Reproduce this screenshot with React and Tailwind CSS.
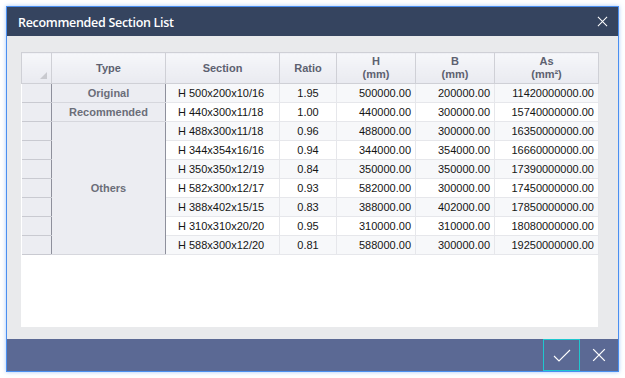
import React from "react";

const rows = [
  ["H 500x200x10/16", "1.95", "500000.00", "200000.00", "11420000000.00"],
  ["H 440x300x11/18", "1.00", "440000.00", "300000.00", "15740000000.00"],
  ["H 488x300x11/18", "0.96", "488000.00", "300000.00", "16350000000.00"],
  ["H 344x354x16/16", "0.94", "344000.00", "354000.00", "16660000000.00"],
  ["H 350x350x12/19", "0.84", "350000.00", "350000.00", "17390000000.00"],
  ["H 582x300x12/17", "0.93", "582000.00", "300000.00", "17450000000.00"],
  ["H 388x402x15/15", "0.83", "388000.00", "402000.00", "17850000000.00"],
  ["H 310x310x20/20", "0.95", "310000.00", "310000.00", "18080000000.00"],
  ["H 588x300x12/20", "0.81", "588000.00", "300000.00", "19250000000.00"],
];

const XIcon = ({ size = 12 }) => (
  <svg width={size} height={size} viewBox="0 0 12 12" fill="none" stroke="white" strokeWidth="1.1">
    <path d="M1 1L11 11M11 1L1 11" />
  </svg>
);

const th = "border border-[#cfd0d6] bg-gradient-to-b from-[#f6f7fa] to-[#e9eaf0] text-[#5d6170] font-bold leading-[13px] p-0";
const typeCell = "border-r border-r-[#8e909c] border-b border-b-[#d6d7dd] bg-[#ecedf2] text-[#6b6e79] font-bold text-center p-0";
const rhCell = "border-r border-r-[#8e909c] border-b border-b-[#c9cad1] bg-[#ecedf2] p-0";
const cell = "border-r border-b border-[#e6e7eb] p-0 h-[19px]";

export default function App() {
  return (
    <div className="w-[625px] h-[378px] bg-white p-[6px]">
      <div className="w-[613px] h-[366px] border border-[#4a8ff0] shadow-[0_0_4px_rgba(74,143,240,0.5)] flex flex-col bg-[#e9eaec]">
        <div className="h-[29px] bg-[#35445f] flex items-center justify-between pl-[11px] pr-[10px]">
          <span className="text-white text-[12.5px] font-semibold pt-[4px]" style={{ fontFamily: "'Open Sans', sans-serif" }}>
            <span className="tracking-[-0.3px]">Recommended Section List</span>
          </span>
          <XIcon size={11} />
        </div>
        <div className="flex-1 pl-[14px] pr-[20px] pt-[16px] pb-[12px]">
          <div className="bg-white h-full">
            <table
              className="border-collapse table-fixed text-[11px]"
              style={{ fontFamily: "'Liberation Sans', Arial, sans-serif", width: 577 }}
            >
              <colgroup>
                <col style={{ width: 30 }} />
                <col style={{ width: 114 }} />
                <col style={{ width: 114 }} />
                <col style={{ width: 57 }} />
                <col style={{ width: 79 }} />
                <col style={{ width: 79 }} />
                <col style={{ width: 104 }} />
              </colgroup>
              <thead>
                <tr className="h-[31px]">
                  <th className={th + " relative"}>
                    <div className="absolute right-[4px] bottom-[4px] w-0 h-0 border-l-[7px] border-l-transparent border-b-[7px] border-b-[#c9cacf]" />
                  </th>
                  <th className={th}>Type</th>
                  <th className={th}>Section</th>
                  <th className={th}>Ratio</th>
                  <th className={th}>H<br />(mm)</th>
                  <th className={th}>B<br />(mm)</th>
                  <th className={th}>As<br />(mm²)</th>
                </tr>
              </thead>
              <tbody className="text-[#151515]">
                {rows.map((r, i) => (
                  <tr key={i} className={i % 2 === 0 ? "bg-[#f7f8fa]" : "bg-white"}>
                    <td className={rhCell} />
                    {i === 0 && <td className={typeCell}>Original</td>}
                    {i === 1 && <td className={typeCell}>Recommended</td>}
                    {i === 2 && (
                      <td rowSpan={7} className={typeCell + " border-b-[#a9abb5]"}>Others</td>
                    )}
                    <td className={cell + " pl-[12px] text-left"}>{r[0]}</td>
                    <td className={cell + " text-center"}>{r[1]}</td>
                    <td className={cell + " text-right pr-[4px]"}>{r[2]}</td>
                    <td className={cell + " text-right pr-[4px]"}>{r[3]}</td>
                    <td className={cell + " text-right pr-[4px]"}>{r[4]}</td>
                  </tr>
                ))}
              </tbody>
            </table>
          </div>
        </div>
        <div className="h-[32px] bg-[#5b6994] flex justify-end">
          <button className="w-[37px] h-[32px] border border-[#1fc7cf] flex items-center justify-center">
            <svg width="18" height="13" viewBox="0 0 18 13" fill="none" stroke="white" strokeWidth="1.1">
              <path d="M1 7L6 12L17 1" />
            </svg>
          </button>
          <button className="w-[38px] h-[32px] flex items-center justify-center">
            <XIcon size={14} />
          </button>
        </div>
      </div>
    </div>
  );
}
